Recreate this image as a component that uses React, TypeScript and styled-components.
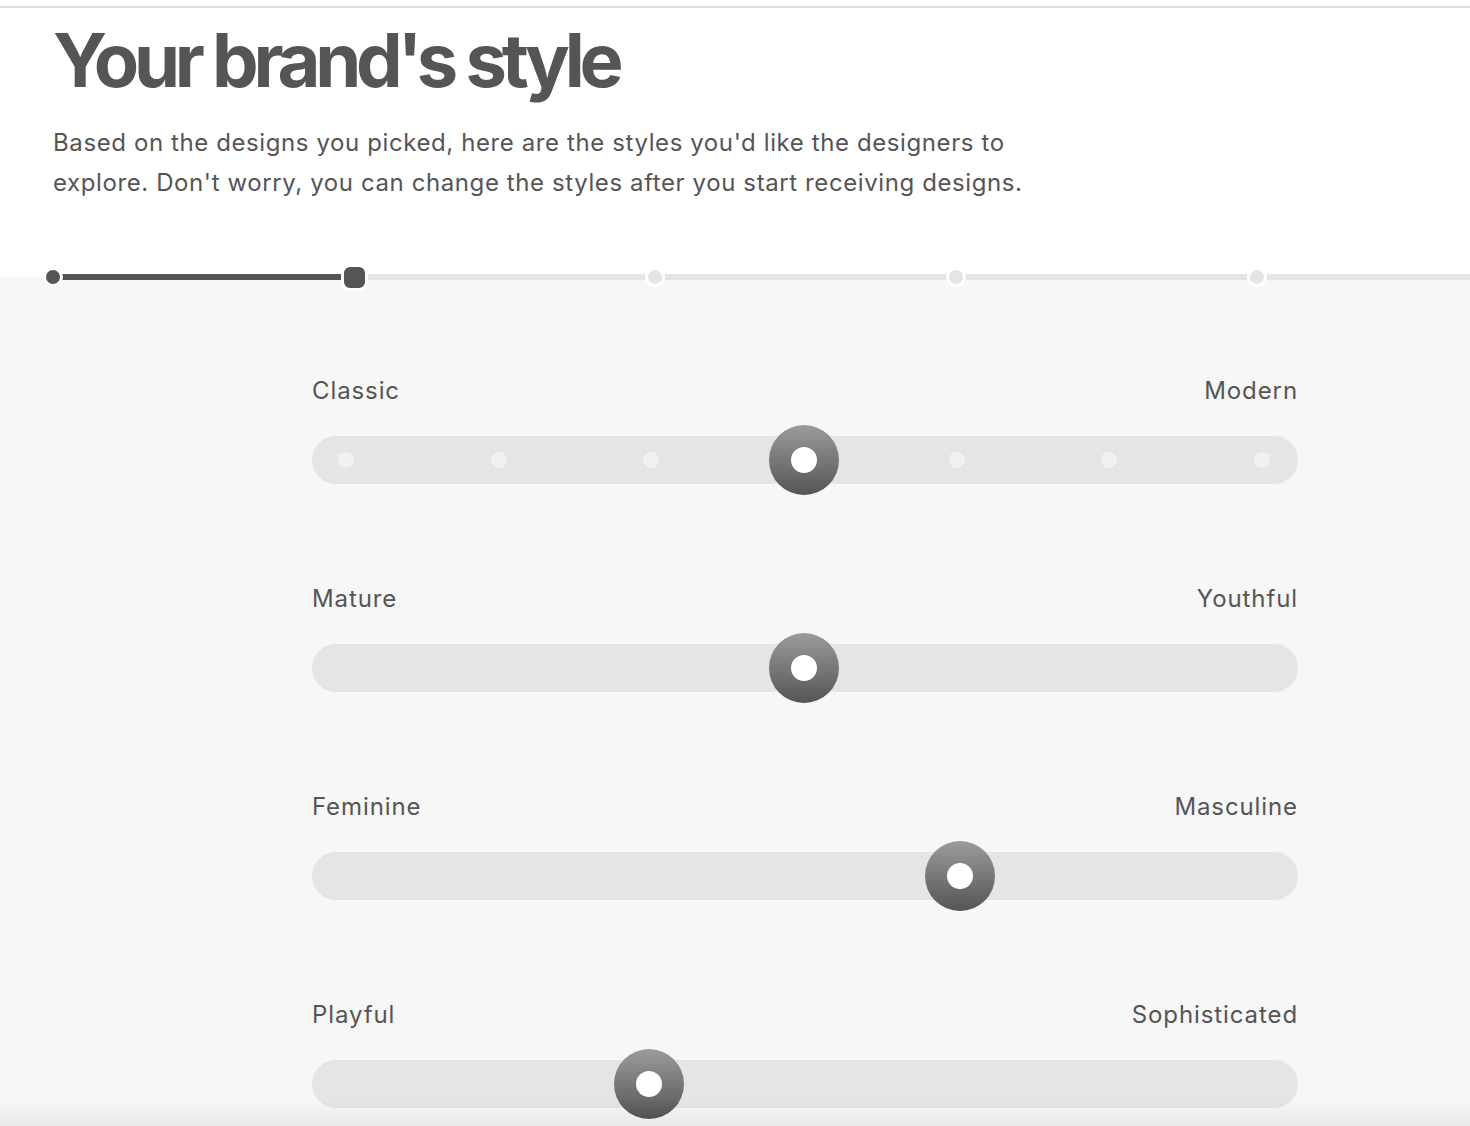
import { createGlobalStyle, styled } from "styled-components";

const GlobalStyle = createGlobalStyle`
  html, body {
    margin: 0;
    padding: 0;
    background: #f7f7f7;
  }
  body {
    font-family: Inter, Roboto, "Liberation Sans", Arial, sans-serif;
    color: #555;
  }
`;

const Page = styled.div`
  min-height: 1126px;
  background: #f7f7f7;
`;

const TopBar = styled.div`
  height: 6px;
  background: #fff;
  border-bottom: 2px solid #dedee2;
`;

const Header = styled.header`
  background: #fff;
  padding: 12px 53px 0;
  height: 255px;
  box-sizing: border-box;
`;

const Title = styled.h1`
  margin: 0;
  font-family: Inter, "Liberation Sans", sans-serif;
  font-weight: 700;
  font-size: 74px;
  line-height: 80px;
  letter-spacing: -5.2px;
  color: #555;
`;

const Intro = styled.p`
  margin: 23px 0 0;
  max-width: 1010px;
  font-size: 24px;
  line-height: 40px;
  letter-spacing: 0.6px;
  color: #555;
`;

// progress stepper sits on the white / gray boundary
const Stepper = styled.div`
  display: flex;
  align-items: center;
  height: 28px;
  padding-left: 53px;
  background: linear-gradient(#fff 0 50%, #f7f7f7 50% 100%);
`;

const StepCell = styled.div<{ $last?: boolean }>`
  display: flex;
  align-items: center;
  flex: ${(p) => (p.$last ? "1" : "0 0 301px")};
`;

const StepLine = styled.div<{ $done?: boolean }>`
  flex: 1;
  height: 6px;
  background: ${(p) => (p.$done ? "#555" : "#e5e5e5")};
`;

const StepDot = styled.div<{ $size: number; $done?: boolean; $current?: boolean }>`
  flex: 0 0 auto;
  width: ${(p) => p.$size}px;
  height: ${(p) => p.$size}px;
  margin-left: ${(p) => -(p.$size / 2 + 3)}px;
  margin-right: -3px;
  border: 3px solid #fff;
  border-radius: ${(p) => (p.$current ? "9px" : "50%")};
  background: ${(p) => (p.$done ? "#555" : "#e5e5e5")};
  position: relative;
  z-index: 1;
`;

const Sliders = styled.section`
  display: flex;
  flex-direction: column;
  gap: 100px;
  padding: 85px 172px 120px 312px;
`;

const SliderRow = styled.div`
  display: flex;
  flex-direction: column;
  gap: 30px;
`;

const Labels = styled.div`
  display: flex;
  justify-content: space-between;
  font-size: 24px;
  line-height: 30px;
  letter-spacing: 0.9px;
  color: #555;
`;

const Track = styled.div`
  position: relative;
  height: 48px;
  border-radius: 24px;
  background: #e5e5e5;
  display: flex;
  align-items: center;
  justify-content: space-between;
  padding: 0 28px 0 26px;
`;

const Tick = styled.span<{ $hidden?: boolean }>`
  width: 16px;
  height: 16px;
  border-radius: 50%;
  background: #f1f1f1;
  visibility: ${(p) => (p.$hidden ? "hidden" : "visible")};
`;

const Thumb = styled.div`
  position: absolute;
  top: 50%;
  width: 70px;
  height: 70px;
  margin: -35px 0 0 -35px;
  border-radius: 50%;
  background: linear-gradient(#9b9b9b, #555);
  display: flex;
  align-items: center;
  justify-content: center;
  &::after {
    content: "";
    width: 26px;
    height: 26px;
    border-radius: 50%;
    background: #fff;
  }
`;

const BottomFade = styled.div`
  position: fixed;
  left: 0;
  right: 0;
  bottom: 0;
  height: 26px;
  background: linear-gradient(rgba(0, 0, 0, 0), rgba(0, 0, 0, 0.06));
  pointer-events: none;
`;

const steps = [
  { size: 14, done: true },
  { size: 21, done: true, current: true },
  { size: 14 },
  { size: 14 },
  { size: 14 },
];

const sliders = [
  { left: "Classic", right: "Modern", value: 0.5, ticks: true },
  { left: "Mature", right: "Youthful", value: 0.5 },
  { left: "Feminine", right: "Masculine", value: 0.67 },
  { left: "Playful", right: "Sophisticated", value: 0.331 },
];

export default function App() {
  return (
    <Page>
      <GlobalStyle />
      <TopBar />
      <Header>
        <Title>Your brand's style</Title>
        <Intro>
          Based on the designs you picked, here are the styles you'd like the designers to
          explore. Don't worry, you can change the styles after you start receiving designs.
        </Intro>
      </Header>
      <Stepper>
        {steps.map((s, i) => (
          <StepCell key={i} $last={i === steps.length - 1}>
            <StepDot $size={s.size} $done={s.done} $current={s.current} />
            <StepLine $done={i === 0} />
          </StepCell>
        ))}
      </Stepper>
      <Sliders>
        {sliders.map((s) => (
          <SliderRow key={s.left}>
            <Labels>
              <span>{s.left}</span>
              <span>{s.right}</span>
            </Labels>
            <Track>
              {Array.from({ length: 7 }).map((_, i) => (
                <Tick key={i} $hidden={!s.ticks} />
              ))}
              <Thumb style={{ left: `calc(34px + ${s.value} * (100% - 70px))` }} />
            </Track>
          </SliderRow>
        ))}
      </Sliders>
      <BottomFade />
    </Page>
  );
}
